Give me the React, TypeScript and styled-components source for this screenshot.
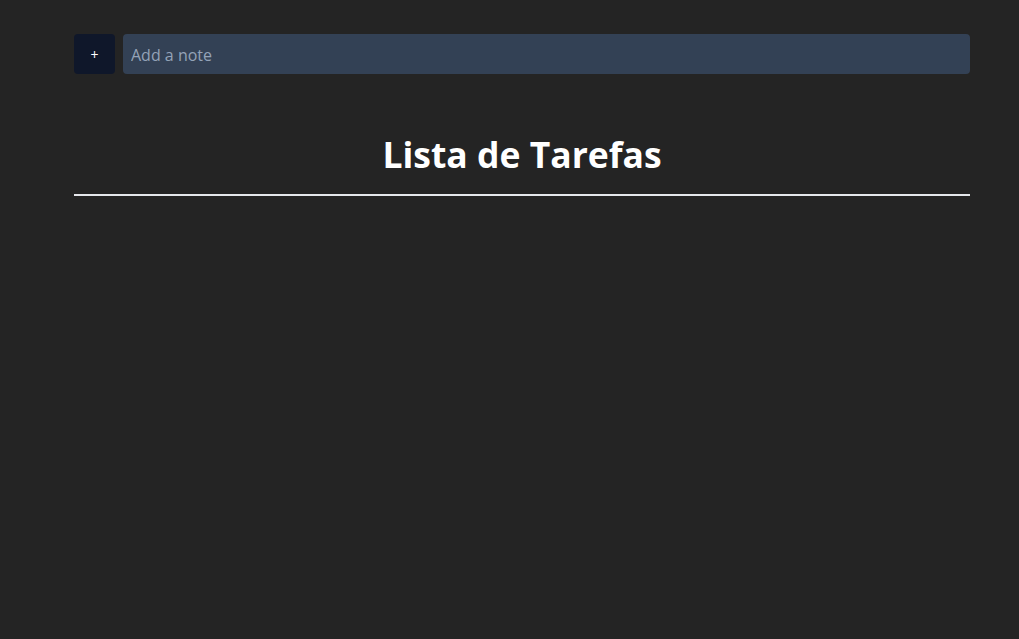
import styled, { createGlobalStyle } from 'styled-components'

const GlobalStyle = createGlobalStyle`
  html, body {
    margin: 0;
    padding: 0;
    background: #242424;
    font-family: "Open Sans", "Noto Sans", sans-serif;
    color: #ffffff;
  }
  * {
    box-sizing: border-box;
  }
`

const Page = styled.div`
  min-height: 639px;
  padding: 34px 49px 0 74px;
`

const Form = styled.form`
  display: flex;
  gap: 8px;
  height: 40px;
`

const AddButton = styled.button`
  width: 41px;
  height: 40px;
  border: none;
  border-radius: 4px;
  background: #0f172a;
  color: #ffffff;
  font-family: inherit;
  font-size: 14px;
  padding: 1px 0 0 0;
  cursor: pointer;
`

const NoteInput = styled.input`
  flex: 1;
  height: 40px;
  border: none;
  border-radius: 4px;
  background: #334155;
  color: #ffffff;
  padding: 2px 8px 0 8px;
  font-family: inherit;
  font-size: 16px;
  outline: none;

  &::placeholder {
    color: #94a3b8;
  }
`

const Title = styled.h1`
  margin: 53px 0 0 0;
  padding-bottom: 13px;
  text-align: center;
  font-size: 35.5px;
  line-height: 54px;
  font-weight: 700;
  border-bottom: 2px solid #e5e7eb;
`

export default function App() {
  return (
    <>
      <GlobalStyle />
      <Page>
        <Form onSubmit={(e) => e.preventDefault()}>
          <AddButton type="submit">+</AddButton>
          <NoteInput placeholder="Add a note" />
        </Form>
        <Title>Lista de Tarefas</Title>
      </Page>
    </>
  )
}
